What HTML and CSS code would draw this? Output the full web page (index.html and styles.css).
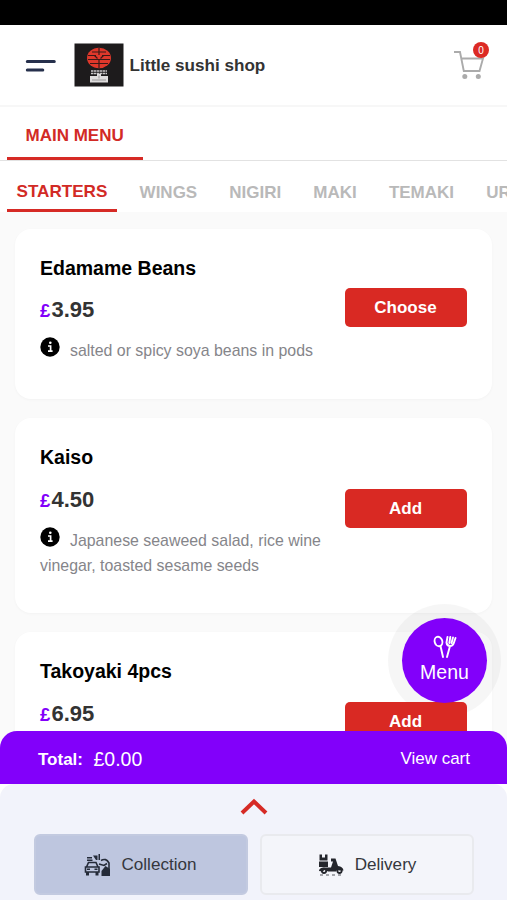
FILE: index.html
```html
<!DOCTYPE html>
<html lang="en">
<head>
<meta charset="utf-8">
<title>Little sushi shop</title>
<link rel="stylesheet" href="styles.css">
</head>
<body>
<div class="app">
  <div class="status-bar"></div>
  <header class="header">
    <svg class="burger" width="32" height="16" viewBox="0 0 32 16" fill="none" stroke="#26304c" stroke-width="3" stroke-linecap="round"><path d="M3.300 4.500H30.300M3.300 13H18.800"/></svg>
    <svg class="logo" width="50" height="44" viewBox="0 0 50 44">
      <rect x=".5" y=".5" width="49" height="43" fill="#1d1b1c"/>
      <ellipse cx="25" cy="15" rx="12" ry="10.300" fill="#df382b"/>
      <path d="M18 9h14M14 12.500h8M28 12.500h8M14 16.500h22M16 20.500h18M25 5v7M25 17v8M20.500 12.500l3 3M29.500 12.500l-3 3" stroke="#3a1917" stroke-width="1.200" fill="none"/>
      <path d="M17 28h16M17 30.500h16" stroke="#c9c6c7" stroke-width="1.500" stroke-dasharray="2.500 .5"/>
      <path d="M16 33h7v-2h4v2h7v6.500H16z" fill="#dedcdc"/>
      <path d="M18 37h14M25 32.500v3" stroke="#9a9899" stroke-width="1"/>
    </svg>
    <h1 class="shop-name">Little sushi shop</h1>
    <div class="cart">
      <svg width="32" height="32" viewBox="0 0 32 32" fill="none" stroke="#ababab" stroke-width="1.900"><path d="M0 3H6L9.800 22H25.500L29 9.500H7.500"/><circle cx="10.800" cy="27.500" r="2.500" fill="#ababab" stroke="none"/><circle cx="24.300" cy="27.500" r="2.500" fill="#ababab" stroke="none"/></svg>
      <span class="badge">0</span>
    </div>
  </header>
  <nav class="main-tabs"><span class="tab tab-main">MAIN MENU</span></nav>
  <nav class="sub-tabs">
    <span class="tab active">STARTERS</span><span class="tab">WINGS</span><span class="tab">NIGIRI</span><span class="tab">MAKI</span><span class="tab">TEMAKI</span><span class="tab">URAMAKI</span>
  </nav>
  <main class="list">
    <article class="card short">
      <div class="info">
        <h2>Edamame Beans</h2>
        <p class="price"><span>£</span>3.95</p>
        <p class="desc"><svg class="i" width="20" height="20" viewBox="0 0 20 20"><circle cx="10" cy="10" r="9.700"/><path d="M8 9h2.600v5M8 14.200h4.600" stroke="#fff" stroke-width="1.700" fill="none"/><circle cx="10.300" cy="5.700" r="1.300" fill="#fff"/></svg>salted or spicy soya beans in pods</p>
      </div>
      <button class="buy">Choose</button>
    </article>
    <article class="card tall">
      <div class="info">
        <h2>Kaiso</h2>
        <p class="price"><span>£</span>4.50</p>
        <p class="desc"><svg class="i" width="20" height="20" viewBox="0 0 20 20"><circle cx="10" cy="10" r="9.700"/><path d="M8 9h2.600v5M8 14.200h4.600" stroke="#fff" stroke-width="1.700" fill="none"/><circle cx="10.300" cy="5.700" r="1.300" fill="#fff"/></svg>Japanese seaweed salad, rice wine vinegar, toasted sesame seeds</p>
      </div>
      <button class="buy">Add</button>
    </article>
    <article class="card short last">
      <div class="info">
        <h2>Takoyaki 4pcs</h2>
        <p class="price"><span>£</span>6.95</p>
      </div>
      <button class="buy">Add</button>
    </article>
  </main>
  <div class="fab-ring"></div>
  <div class="fab">
    <svg width="24" height="25" viewBox="0 0 24 25" fill="none" stroke="#fff" stroke-width="1.900" stroke-linecap="round"><ellipse cx="5.500" cy="6.500" rx="3.800" ry="4.800" transform="rotate(-18 5.500 6.500)"/><path d="M7.500 11L10 22M14 22L17 11M14.500 2L13.500 7.500Q14 11 17 11Q20 11 20.800 8L22.500 3M17.300 2L16.300 8M20 2.500L18.500 8"/></svg>
    <span>Menu</span>
  </div>
  <footer class="footer">
    <div class="total"><b>Total:</b><span class="amount">£0.00</span><span class="view">View cart</span></div>
    <div class="panel-wrap"><div class="panel">
      <svg class="chevron" width="28" height="18" viewBox="0 0 28 18" fill="none" stroke="#d62a25" stroke-width="4"><path d="M2 16L14 4.500L26 16"/></svg>
      <div class="modes">
        <div class="mode selected">
          <svg width="27" height="24" viewBox="0 0 27 24" fill="#252b39"><path d="M3 4h5v1.500H3zM3 6.500h5.500V8H3zM9 2.500h4.500V7H12zM14.500 1H16v6h-1.500z"/><path d="M2.500 14L4.500 9.500H12L14 14M1.500 14h13.500v5H1.500z" fill="none" stroke="#252b39" stroke-width="1.600"/><path d="M2 19h3v3.500H2zM11.500 19h3v3.500h-3zM3 15.500h3v1.500H3zM10.500 15.500h3v1.500h-3z"/><path d="M17 7.500Q22 4.500 25 10V18M15 11l5 1.500 3-2" fill="none" stroke="#252b39" stroke-width="1.600"/><path d="M17.500 18l4-5 4.500 3v7h-8.500z"/></svg>
          <span>Collection</span>
        </div>
        <div class="mode">
          <svg width="26" height="24" viewBox="0 0 26 24" fill="#24262c"><path d="M1.500 1.500h2.500v3h3v-3h2.500v6h-8zM1 8.500h9V14H1zM1 18q0-3 4-3.500h8l1-3 1-3h-2V5.500h4.500l2.500 7.500q5 .5 5.500 4.500H22q-4-1-4 1h-8q-4-3-5 0z"/><circle cx="6" cy="17.800" r="2.200" fill="none" stroke="#24262c" stroke-width="1.800"/><circle cx="21.500" cy="17.800" r="2.200" fill="none" stroke="#24262c" stroke-width="1.800"/><path d="M2 22h3M8 22h3M14 22h3M20 22h3" stroke="#55575c" stroke-width="1"/></svg>
          <span>Delivery</span>
        </div>
      </div>
    </div></div>
  </footer>
</div>
</body>
</html>
```
FILE: styles.css
```css
* { box-sizing: border-box; margin: 0; padding: 0; }
body { font-family: "Liberation Sans", Arial, sans-serif; background: #fff; overflow: hidden; }
.app { position: relative; width: 507px; height: 900px; display: flex; flex-direction: column; overflow: hidden; background: #fafafa; }
.status-bar { height: 25px; flex: none; background: #000; }
.header { height: 82px; flex: none; display: flex; align-items: center; padding: 0 24px; background: #fff; border-bottom: 2px solid #f7f7f7; }
.burger { margin-right: 18px; }
.logo { margin-right: 5.500px; }
.shop-name { padding-top: 2px; font-size: 17.100px; line-height: 24px; color: #333; white-space: nowrap; }
.cart { position: relative; margin-left: auto; width: 32px; height: 32px; margin-right: -3px; }
.cart svg { display: block; }
.badge { position: absolute; left: 19px; top: -7px; width: 16px; height: 16px; border-radius: 50%; background: #dc2a24; color: #fff; font-size: 10px; line-height: 17px; text-align: center; }
.main-tabs { height: 54px; flex: none; display: flex; padding-left: 7px; background: #fff; border-bottom: 1px solid #e2e2e2; }
.tab { flex: none; font-size: 17px; font-weight: bold; color: #b9b9b9; line-height: 20px; white-space: nowrap; }
.tab-main { width: 136px; height: 53px; padding: 19px 0 0 18.500px; color: #d22a25; border-bottom: 3px solid #d62a25; }
.sub-tabs { height: 51px; flex: none; display: flex; gap: 32.100px; padding-left: 7px; background: #fff; overflow: hidden; }
.sub-tabs .tab { padding-top: 22px; }
.sub-tabs .active { width: 110px; margin-right: -9.500px; padding: 21px 0 0 9.500px; color: #d22a25; border-bottom: 3px solid #d62a25; height: 51px; font-size: 17.100px; }
.list { flex: 1; min-height: 0; display: flex; flex-direction: column; gap: 19px; padding: 17px 15px 0; overflow: hidden; }
.card { flex: none; display: flex; justify-content: space-between; padding: 28px 25px 0; border-radius: 16px; background: #fff; box-shadow: 0 1px 3px rgba(0,0,0,.03); }
.short { height: 170px; }
.tall { height: 195px; }
.info { width: 290px; }
.info h2 { font-size: 19.500px; line-height: 22px; color: #000; }
.price { margin-top: 18px; font-size: 22px; line-height: 26px; font-weight: bold; color: #333; }
.tall .price, .last .price { margin-top: 19px; }
.price span { display: inline-block; width: 11.500px; font-size: 18.500px; color: #8200fa; }
.desc { margin-top: 15px; font-size: 15.900px; line-height: 24.500px; color: #85858a; }
.i { height: 20px; margin: -8px 10px -1px 0; vertical-align: 0; }
.buy { position: relative; z-index: 2; left: -0.500px; width: 122px; height: 39px; margin-top: 31px; padding-top: 1px; border: 0; border-radius: 5px; background: #d92923; color: #fff; font: bold 17px "Liberation Sans", Arial, sans-serif; }
.tall .buy { margin-top: 43px; }
.last .buy { margin-top: 42px; }
.fab-ring { position: absolute; z-index: 1; left: 388px; top: 604px; width: 113px; height: 113px; border-radius: 50%; background: rgba(0,0,0,.035); }
.fab { position: absolute; z-index: 3; left: 402px; top: 618px; width: 85px; height: 85px; border-radius: 50%; display: flex; flex-direction: column; align-items: center; padding-top: 17px; background: #8200fa; color: #fff; font-size: 19.500px; line-height: 24px; }
.footer { position: relative; z-index: 4; height: 169px; margin-top: -16px; flex: none; }
.total { height: 53px; display: flex; align-items: center; padding: 3px 37px 0 38px; border-radius: 17px 17px 0 0; background: #8200fa; color: #fff; }
.total b { padding-top: 1px; font-size: 17px; }
.amount { margin-left: 10.500px; font-size: 19.500px; }
.view { margin-left: auto; font-size: 17px; }
.panel-wrap { background: #fff; }
.panel { height: 116px; padding: 13px 33px 0 34px; border-radius: 14px 14px 0 0; background: #f2f3fb; }
.chevron { display: block; margin: 0 auto; }
.modes { display: grid; grid-template-columns: 214px 214px; gap: 12px; margin-top: 19px; }
.mode { height: 61px; display: flex; align-items: center; justify-content: center; gap: 11px; border: 2px solid #e9eaee; border-radius: 6px; background: #f4f5fa; color: #35373d; font-size: 17.100px; }
.mode span { padding-top: 1px; }
.selected { background: #bec6df; border-color: #c3cae0; gap: 10px; padding-right: 1px; }
```
